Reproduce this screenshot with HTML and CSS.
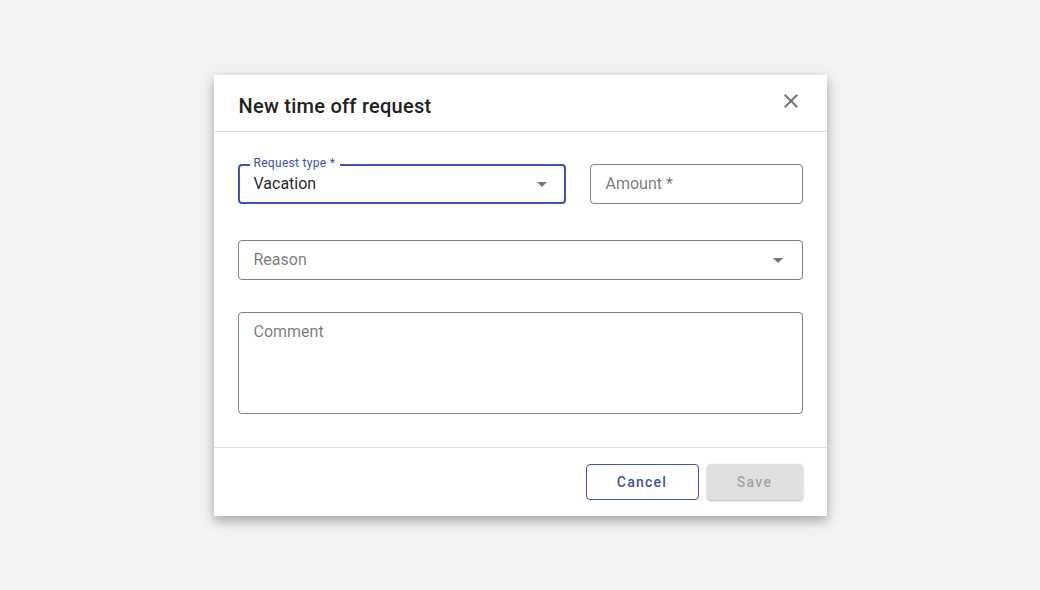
FILE: index.html
```html
<!DOCTYPE html>
<html lang="en">
<head>
<meta charset="utf-8">
<title>New time off request</title>
<link rel="stylesheet" href="styles.css">
</head>
<body>
<div class="backdrop">
  <div class="dialog" role="dialog" aria-labelledby="dlg-title">
    <header class="dialog-header">
      <h2 id="dlg-title" class="dialog-title">New time off request</h2>
      <button class="icon-btn" aria-label="Close">
        <svg viewBox="0 0 24 24" width="24" height="24"><path d="M19 6.41 17.59 5 12 10.59 6.41 5 5 6.41 10.59 12 5 17.59 6.41 19 12 13.41 17.59 19 19 17.59 13.41 12z"/></svg>
      </button>
    </header>
    <div class="dialog-body">
      <div class="row row-first">
        <div class="field field-type">
          <span class="float-label">Request type *</span>
          <div class="box box-focused">
            <span class="value">Vacation</span>
            <svg class="arrow" viewBox="0 0 24 24" width="24" height="24"><path d="M7 10l5 5 5-5z"/></svg>
          </div>
        </div>
        <div class="field field-amount">
          <div class="box">
            <span class="placeholder">Amount *</span>
          </div>
        </div>
      </div>
      <div class="row row-reason">
        <div class="field field-full">
          <div class="box">
            <span class="placeholder">Reason</span>
            <svg class="arrow" viewBox="0 0 24 24" width="24" height="24"><path d="M7 10l5 5 5-5z"/></svg>
          </div>
        </div>
      </div>
      <div class="row">
        <div class="field field-full">
          <div class="box box-area">
            <span class="placeholder">Comment</span>
          </div>
        </div>
      </div>
    </div>
    <footer class="dialog-footer">
      <button class="btn btn-outline">Cancel</button>
      <button class="btn btn-disabled" disabled>Save</button>
    </footer>
  </div>
</div>
</body>
</html>
```

FILE: styles.css
```css
* { box-sizing: border-box; }
html, body { margin: 0; padding: 0; }
body {
  background: #f4f4f4;
  font-family: Roboto, "Liberation Sans", Arial, sans-serif;
  color: rgba(0,0,0,0.87);
}
.backdrop {
  width: 100%;
  height: 100vh;
  display: flex;
  align-items: center;
  justify-content: center;
}
.dialog {
  width: 613px;
  background: #fff;
  box-shadow: 0 5px 10px rgba(0,0,0,0.28), 0 2px 22px rgba(0,0,0,0.08);
  display: flex;
  flex-direction: column;
}
.dialog-header {
  display: flex;
  justify-content: space-between;
  align-items: flex-start;
  height: 57px;
  padding: 15px 24px 0 24px;
  border-bottom: 1px solid #e0e0e0;
}
.dialog-title {
  margin: 0;
  padding-left: 1px;
  font-size: 20px;
  line-height: 32px;
  font-weight: 500;
  color: #212121;
  letter-spacing: 0.26px;
}
.icon-btn {
  margin-top: -1px;
  margin-right: 0;
  padding: 0;
  border: 0;
  background: none;
  width: 24px;
  height: 24px;
  display: flex;
  cursor: pointer;
}
.icon-btn svg { fill: #757575; }
.dialog-body {
  padding: 32px 24px 33px 24px;
  display: flex;
  flex-direction: column;
}
.row {
  display: flex;
  gap: 24px;
}
.row-first { margin-bottom: 36px; }
.row-reason { margin-bottom: 32px; }
.field {
  position: relative;
}
.field-type { width: 328px; }
.field-amount { flex: 1; }
.field-full { flex: 1; }
.box {
  height: 40px;
  border: 1px solid rgba(0,0,0,0.5);
  border-radius: 4px;
  display: flex;
  align-items: center;
  padding: 0 12px 0 15px;
  font-size: 16px;
  line-height: 19px;
}
.box-focused {
  border: 2px solid #3f51b5;
  padding-left: 14px;
  padding-right: 10px;
}
.box-area {
  height: 102px;
  align-items: flex-start;
  padding-top: 9px;
}
.value { flex: 1; color: rgba(0,0,0,0.87); }
.placeholder { flex: 1; color: rgba(0,0,0,0.54); }
.arrow { fill: rgba(0,0,0,0.54); flex: none; }
.float-label {
  position: absolute;
  left: 12px;
  top: -7px;
  padding: 0 5px 0 4px;
  background: #fff;
  font-size: 12px;
  line-height: 12px;
  color: #3f51b5;
  letter-spacing: 0.3px;
}
.dialog-footer {
  border-top: 1px solid #e0e0e0;
  padding: 16px 24px 16px 24px;
  display: flex;
  justify-content: flex-end;
  gap: 8px;
}
.btn {
  height: 36px;
  border-radius: 4px;
  font-family: Roboto, "Liberation Sans", Arial, sans-serif;
  font-size: 14px;
  font-weight: 500;
  letter-spacing: 1.25px;
  padding: 0;
  display: flex;
  align-items: center;
  justify-content: center;
}
.btn-outline {
  width: 113px;
  background: #fff;
  border: 1px solid #3f51b5;
  color: #3f51b5;
}
.btn-disabled {
  width: 96px;
  background: #e0e0e0;
  border: 0;
  color: rgba(0,0,0,0.3);
  box-shadow: 0 1px 3px rgba(0,0,0,0.2), 0 1px 1px rgba(0,0,0,0.1);
}
```
